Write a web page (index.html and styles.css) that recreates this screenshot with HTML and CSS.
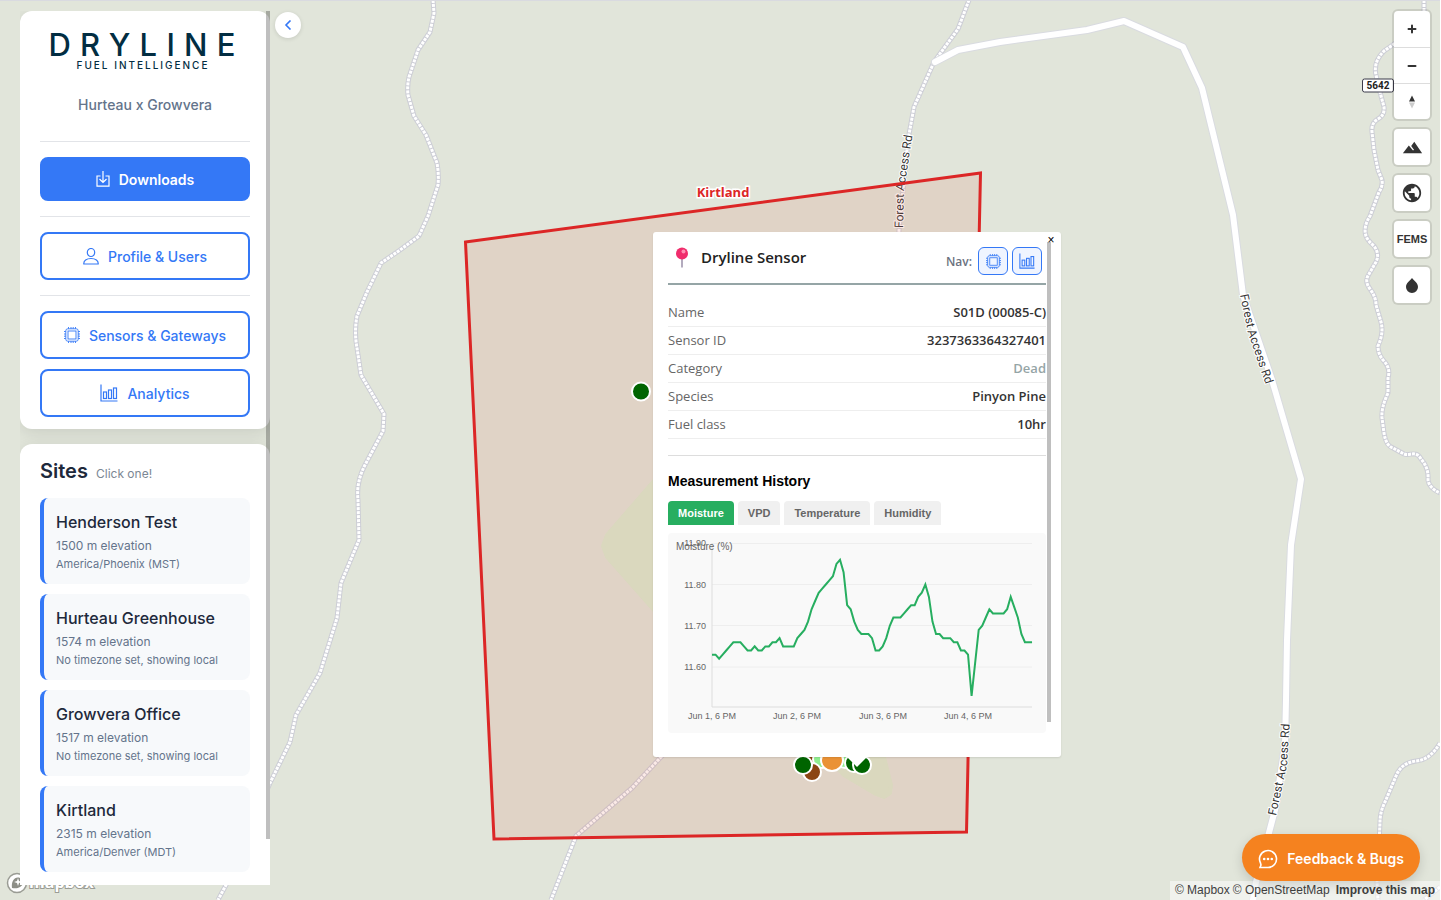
FILE: index.html
```html
<!DOCTYPE html>
<html lang="en">
  <head>
    <meta charset="utf-8" />
    <title>Dryline Fuel Intelligence</title>
    <link rel="stylesheet" href="styles.css">
  </head>
  <body>
    <!-- shared icons -->
    <svg class="sprite" aria-hidden="true">
      <symbol id="icon-chip" viewBox="0 0 16 16">
        <rect x="1.800" y="1.800" width="12.400" height="12.400" rx="2" />
        <rect x="4" y="4" width="8" height="8" />
        <path d="M4.500 0v1.800M7 0v1.800M9.200 0v1.800M11.500 0v1.800M4.500 14.200v1.800M7 14.200v1.800M9.200 14.200v1.800M11.500 14.200v1.800M0 4.500h1.800M0 7h1.800M0 9.200h1.800M0 11.500h1.800M14.200 4.500h1.800M14.200 7h1.800M14.200 9.200h1.800M14.200 11.500h1.800" />
      </symbol>
      <symbol id="icon-chart" viewBox="0 0 18 18">
        <path d="M1 .5V17h16.500" />
        <rect x="3.500" y="8" width="3" height="6.500" />
        <rect x="8.500" y="6" width="3" height="8.500" />
        <rect x="13.500" y="4" width="3" height="10.500" />
      </symbol>
    </svg>

    <div class="app">
      <svg class="map" viewBox="0 0 1440 900" preserveAspectRatio="xMidYMid slice">
        <defs>
          <path id="trail-west" d="M433 0L434 13L430 32L418 50L409 77Q407 86 408 95L414 116L426 135L437 163Q439 174 438 185L428 216L419 236L400 250L381 263L367 292L357 316Q354 332 357 348L361 375L384 414L383 431L365 465Q356 482 358 500L359 540L341 583L337 618L320 673L296 715L290 742L270 783L226 885L218 900" />
          <path id="trail-north" d="M969 0L958 29L934 62L914 107L908 140L899 230L895 300" />
          <path id="trail-south" d="M680 735L661 757L632 788L576 836L551 900" />
          <path id="trail-east" d="M1424 0L1424 14Q1415 32 1394 44L1384 51Q1373 62 1376 75L1380 92L1384 107Q1385 115 1378 119Q1371 123 1372 132L1374 150L1378 170L1382 180Q1383 186 1379 192L1370 216Q1363 227 1366 236Q1368 241 1374 246Q1380 254 1376 262L1369 274Q1364 281 1370 289Q1376 297 1376 305L1381 322Q1384 333 1378 346Q1378 354 1383 360Q1391 368 1388 378L1388 393Q1381 408 1382 418L1384 433Q1386 446 1393 448L1404 454C1410 456 1416 450 1421 459Q1429 468 1428 480Q1429 488 1440 493" />
          <path id="trail-southeast" d="M1440 743Q1430 760 1416 761Q1401 763 1396 776L1385 802Q1380 812 1380 822L1379 845L1377 882L1378 900M1440 887L1424 900" />
          <path id="road" d="M935 62L958 50L1000 42L1087 30L1124 21L1183 47L1202 88L1233 215L1243 295L1272 380L1301 479L1291 545L1287 640L1286 700L1285 745L1275 810L1256 882L1253 900" />
          <path id="label-north" d="M903 228L904 190L913 132" />
          <path id="label-east" d="M1240 295L1248 333L1267 388" />
          <path id="label-south" d="M1276 816L1287 765L1290 718" />
        </defs>

        <polygon class="meadow" points="700,428 607,535 603,546 607,557 700,662" />
        <polygon class="meadow" points="815,745 884,757 891,785 890,793 884,797 876,794 844,775" />

        <g class="trail-edge">
          <use href="#trail-west" /><use href="#trail-north" /><use href="#trail-south" /><use href="#trail-east" /><use href="#trail-southeast" />
        </g>
        <g class="trail">
          <use href="#trail-west" /><use href="#trail-north" /><use href="#trail-south" /><use href="#trail-east" /><use href="#trail-southeast" />
        </g>
        <use href="#road" class="road-edge" />
        <use href="#road" class="road" />

        <g class="road-name">
          <text><textPath href="#label-north">Forest Access Rd</textPath></text>
          <text><textPath href="#label-east">Forest Access Rd</textPath></text>
          <text><textPath href="#label-south">Forest Access Rd</textPath></text>
        </g>
        <rect class="shield" x="1362.500" y="79" width="31" height="13" rx="2" />
        <text class="shield-text" x="1378" y="89">5642</text>

        <polygon class="site-area" points="465.500,242 980.500,173 966.500,832 494,839" />
        <text class="site-name" x="723" y="197">Kirtland</text>

        <g class="sensors">
          <circle class="live" cx="641" cy="391.500" r="9" />
          <circle class="dead" cx="813" cy="757" r="9" />
          <circle class="herb" cx="822" cy="759" r="9" />
          <circle class="herb" cx="845" cy="759" r="9" />
          <circle class="dead" cx="812" cy="772" r="9" />
          <circle class="live" cx="803" cy="765" r="9" />
          <circle class="gateway" cx="832" cy="760" r="11" />
          <circle class="live" cx="854" cy="763" r="9" />
          <circle class="live" cx="862" cy="765" r="9" />
        </g>
      </svg>

      <svg class="mapbox-logo" width="92" height="26" viewBox="0 0 92 26" role="img" aria-label="Mapbox">
        <circle cx="12" cy="13" r="9.500" />
        <path d="M7 18C6 11 10 6 15 8C19 10 19 15 15 17C12 19 9 18 7 18Z" />
        <path class="spark" d="M13 8l1 3 3 1-3 1-1 3-1-3-3-1 3-1z" />
        <text x="24" y="18">mapbox</text>
      </svg>

      <aside class="sidebar">
        <section class="panel">
          <div class="logo">
            <div class="logo-name">DRYLINE</div>
            <div class="logo-tag">FUEL INTELLIGENCE</div>
          </div>
          <p class="org">Hurteau x Growvera</p>
          <hr>
          <button class="btn btn-solid">
            <svg width="14" height="16" viewBox="0 0 14 16"><path d="M4.500 5H1v10.200h12V5H9.500M7 0v11M3.500 8L7 11.500L10.500 8" /></svg>
            Downloads
          </button>
          <hr>
          <button class="btn">
            <svg width="16" height="17" viewBox="0 0 16 17"><ellipse cx="8" cy="4.500" rx="3.700" ry="4" /><path d="M.8 16C.5 12.500 3.500 10.500 8 10.500S15.500 12.500 15.200 16Z" /></svg>
            Profile &amp; Users
          </button>
          <hr>
          <button class="btn">
            <svg class="chip" width="16" height="16"><use href="#icon-chip" /></svg>
            Sensors &amp; Gateways
          </button>
          <button class="btn">
            <svg width="18" height="18"><use href="#icon-chart" /></svg>
            Analytics
          </button>
        </section>

        <section class="panel panel-sites">
          <h2>Sites <small>Click one!</small></h2>
          <button class="site">
            <span class="site-title">Henderson Test</span>
            <span class="site-elev">1500 m elevation</span>
            <span class="site-zone">America/Phoenix (MST)</span>
          </button>
          <button class="site">
            <span class="site-title">Hurteau Greenhouse</span>
            <span class="site-elev">1574 m elevation</span>
            <span class="site-zone">No timezone set, showing local</span>
          </button>
          <button class="site">
            <span class="site-title">Growvera Office</span>
            <span class="site-elev">1517 m elevation</span>
            <span class="site-zone">No timezone set, showing local</span>
          </button>
          <button class="site">
            <span class="site-title">Kirtland</span>
            <span class="site-elev">2315 m elevation</span>
            <span class="site-zone">America/Denver (MDT)</span>
          </button>
        </section>
        <div class="thumb"></div>
      </aside>

      <button class="collapse" aria-label="Collapse sidebar">
        <svg width="8" height="10" viewBox="0 0 8 10"><path d="M6.500 .5L2 5L6.500 9.500" /></svg>
      </button>

      <div class="popup">
        <button class="popup-close" aria-label="Close popup">×</button>
        <header class="popup-head">
          <svg class="pin" width="14" height="21" viewBox="0 0 14 21">
            <path d="M7 11v9.500" stroke="#9a8fa8" stroke-width="1.500" />
            <circle cx="7" cy="6.500" r="6" fill="#f02d6c" />
            <circle cx="8.500" cy="4.500" r="2" fill="#ff8fb2" />
          </svg>
          <h3>Dryline Sensor</h3>
          <span class="nav-label">Nav:</span>
          <button class="nav-btn" aria-label="Sensors"><svg class="chip" width="15" height="15"><use href="#icon-chip" /></svg></button>
          <button class="nav-btn" aria-label="Analytics"><svg width="16" height="16"><use href="#icon-chart" /></svg></button>
        </header>
        <dl class="info">
          <div><dt>Name</dt><dd>S01D (00085-C)</dd></div>
          <div><dt>Sensor ID</dt><dd>3237363364327401</dd></div>
          <div><dt>Category</dt><dd class="category">Dead</dd></div>
          <div><dt>Species</dt><dd>Pinyon Pine</dd></div>
          <div><dt>Fuel class</dt><dd>10hr</dd></div>
        </dl>
        <section class="history">
          <h4>Measurement History</h4>
          <div class="tabs">
            <button class="tab active">Moisture</button>
            <button class="tab">VPD</button>
            <button class="tab">Temperature</button>
            <button class="tab">Humidity</button>
          </div>
          <svg class="chart" viewBox="0 0 378 200">
            <path class="grid" d="M44 10.500H364M44 51.500H364M44 92.500H364M44 134H364" />
            <path class="axis" d="M44 10V174H364" />
            <g class="ylabels">
              <text x="38" y="13">11.90</text>
              <text x="38" y="55">11.80</text>
              <text x="38" y="96">11.70</text>
              <text x="38" y="137">11.60</text>
            </g>
            <text class="unit" x="8" y="17">Moisture (%)</text>
            <g class="xlabels">
              <text x="44" y="186">Jun 1, 6 PM</text>
              <text x="129" y="186">Jun 2, 6 PM</text>
              <text x="215" y="186">Jun 3, 6 PM</text>
              <text x="300" y="186">Jun 4, 6 PM</text>
            </g>
            <!-- x: hours, y: hundredths of a percent above 11 -->
            <polyline class="line" transform="translate(44 381.500) scale(3.556 -4.125)" points="0,63 1,63 2,62 3,63 4,64 5,65 6,66 7,66 8,66 9,65 10,64 11,64 12,65 13,64 14,64 15,65 16,65 17,66 18,66 19,67 20,65 21,65 22,65 23,65 24,67 25,68 26,69 27,71 28,74 29,76 30,78 31,79 32,80 33,81 34,82 35,85 36,86 37,83 38,75 39,74 40,71 41,69 42,68 43,68 44,68 45,67 46,64 47,64 48,65 49,67 50,70 51,72 52,72 53,72 54,73 55,74 56,75 57,75 58,77 59,78 60,80 61,77 62,71 63,68 64,68 65,67 66,67 67,67 68,66 69,66 70,64 71,64 72,63 73,53 74,61 75,69 76,70 77,72 78,74 79,73 80,73 81,73 82,73 83,74 84,77 85,74.500 86,72 87,68 88,66 89,66 90,66" />
          </svg>
        </section>
        <div class="thumb"></div>
      </div>

      <div class="controls">
        <div class="ctrl-group">
          <button aria-label="Zoom in"><svg width="10" height="10" viewBox="0 0 10 10"><path d="M5 1.500v7M1.500 5h7" stroke="#333" stroke-width="2" stroke-linecap="round" /></svg></button>
          <button aria-label="Zoom out"><svg width="10" height="10" viewBox="0 0 10 10"><path d="M1.500 5h7" stroke="#333" stroke-width="2" stroke-linecap="round" /></svg></button>
          <button aria-label="Reset north"><svg width="8" height="14" viewBox="0 0 8 14"><path d="M1 6.500L4 .5L7 6.500Z" fill="#333" /><path d="M1 7.500L4 13.500L7 7.500Z" fill="#ccc" /></svg></button>
        </div>
        <div class="ctrl-group">
          <button aria-label="Terrain"><svg width="21" height="21" viewBox="0 0 24 24"><path d="M14 5.500l-3.500 4.700 3.200 4.300-1.100.8L7.800 9.700 1 18.500h22z" fill="#333" /></svg></button>
        </div>
        <div class="ctrl-group">
          <button aria-label="Globe"><svg width="22" height="22" viewBox="0 0 24 24"><path fill="#333" d="M12 2C6.480 2 2 6.480 2 12s4.480 10 10 10 10-4.480 10-10S17.520 2 12 2zm-1 17.930c-3.950-.49-7-3.850-7-7.930 0-.62.08-1.210.21-1.790L9 15v1c0 1.100.9 2 2 2v1.930zm6.900-2.540c-.26-.81-1-1.390-1.900-1.390h-1v-3c0-.55-.45-1-1-1H8v-2h2c.55 0 1-.45 1-1V7h2c1.100 0 2-.9 2-2v-.41c2.930 1.190 5 4.060 5 7.410 0 2.080-.8 3.970-2.100 5.390z" /></svg></button>
        </div>
        <div class="ctrl-group">
          <button class="fems">FEMS</button>
        </div>
        <div class="ctrl-group">
          <button aria-label="Moisture layer"><svg width="12" height="15" viewBox="0 0 12 15"><path d="M6 0C8 2.500 12 5 12 9A6 6 0 0 1 0 9C0 5 4 2.500 6 0Z" fill="#333" /></svg></button>
        </div>
      </div>

      <button class="feedback">
        <svg width="20" height="20" viewBox="0 0 20 20"><path d="M2 18.500H10A8.500 8.500 0 1 0 2.500 14L3 16Z" /><circle cx="6.200" cy="10" r="1.300" /><circle cx="10" cy="10" r="1.300" /><circle cx="13.800" cy="10" r="1.300" /></svg>
        Feedback &amp; Bugs
      </button>

      <footer class="attribution">
        <a href="#">© Mapbox</a>
        <a href="#">© OpenStreetMap</a>
        <a href="#" class="improve">Improve this map</a>
      </footer>
    </div>
  </body>
</html>
```
FILE: styles.css
```css
*{
  box-sizing: border-box;
  margin: 0;
  padding: 0;
}
body{
  background: #fff;
  font-family: Inter, "Liberation Sans", sans-serif;
}
button{
  font-family: inherit;
  border: 0;
  background: none;
  cursor: pointer;
}
.sprite{
  position: absolute;
  width: 0;
  height: 0;
}
.app{
  position: relative;
  height: 100vh;
  margin-right: 1px;
  overflow: hidden;
  background: #e1e5da;
  border-top: 1px solid #d9dae0;
}

/* map */
.map{
  position: absolute;
  top: -1px;
  left: 0;
  width: 100%;
  height: 100vh;
  z-index: 0;
  clip-path: inset(1px 0 0 0);
}
.meadow{
  fill: #d9ebd0;
  stroke: #d9ebd0;
  stroke-width: 4;
  stroke-linejoin: round;
}
.trail-edge,.trail{
  fill: none;
  stroke-linejoin: round;
}
.trail-edge{
  stroke: #cdced6;
  stroke-width: 5;
}
.trail{
  stroke: #fff;
  stroke-width: 3;
  stroke-dasharray: 3 1;
}
.road-edge,.road{
  fill: none;
  stroke-linejoin: round;
  stroke-linecap: round;
}
.road-edge{
  stroke: #d9dbe0;
  stroke-width: 8;
}
.road{
  stroke: #fff;
  stroke-width: 6;
}
.road-name{
  font: 12px Roboto, sans-serif;
  fill: #333;
  stroke: #fff;
  stroke-width: 2;
  paint-order: stroke;
}
.shield{
  fill: #fff;
  stroke: #3b3b4a;
}
.shield-text{
  font: bold 10px Roboto, sans-serif;
  fill: #222;
  text-anchor: middle;
}
.site-area{
  fill: rgba(225, 92, 72, .13);
  stroke: #dc2626;
  stroke-width: 3;
}
.site-name{
  font: bold 13px "Open Sans", sans-serif;
  fill: #dc2626;
  stroke: #fff;
  stroke-width: 3;
  paint-order: stroke;
  text-anchor: middle;
}
.sensors{
  stroke: #fff;
  stroke-width: 2;
}
.live{
  fill: #006400;
}
.dead{
  fill: #8b4513;
}
.herb{
  fill: #90ee90;
}
.gateway{
  fill: #ea9236;
}
.mapbox-logo{
  position: absolute;
  left: 5px;
  bottom: 4px;
  fill: #fff;
}
.mapbox-logo circle{
  stroke: #9a9c94;
  stroke-width: 1.5;
}
.mapbox-logo path{
  fill: #8d8f87;
}
.mapbox-logo .spark{
  fill: #fff;
}
.mapbox-logo text{
  font: bold 16px "Open Sans", sans-serif;
  stroke: #9a9c94;
  stroke-width: 2;
  paint-order: stroke;
}

/* sidebar */
.sidebar{
  position: absolute;
  top: 10px;
  bottom: 15px;
  left: 20px;
  width: 250px;
  overflow: hidden;
}
.panel{
  display: flex;
  flex-direction: column;
  padding: 20px 20px 12px;
  background: #fff;
  border-radius: 12px;
  box-shadow: 0 4px 16px rgba(0, 0, 0, .1);
}
.logo{
  padding-right: 6px;
  color: #022d42;
  text-align: center;
  white-space: nowrap;
}
.logo-name{
  font-size: 31px;
  font-weight: 500;
  line-height: 28px;
  letter-spacing: .3em;
  margin-right: -.3em;
}
.logo-tag{
  font-size: 10px;
  font-weight: 500;
  line-height: 12px;
  letter-spacing: .2em;
  margin-right: -.2em;
}
.org{
  margin-top: 24px;
  color: #64748b;
  font-size: 14px;
  font-weight: 500;
  line-height: 20px;
  text-align: center;
}
.panel hr{
  border: 0;
  border-top: 1px solid #e2e4e8;
  margin: 15px 0;
}
.org + hr{
  margin-top: 26px;
}
.btn{
  display: flex;
  align-items: center;
  justify-content: center;
  gap: 9px;
  height: 48px;
  color: #3478f6;
  border: 2px solid #3478f6;
  border-radius: 8px;
  font-size: 14px;
  font-weight: 500;
}
.btn + .btn{
  margin-top: 10px;
}
.btn-solid{
  height: 44px;
  color: #fff;
  background: #3478f6;
  font-weight: 600;
}
.btn svg,.nav-btn svg,.collapse svg{
  fill: none;
  stroke: currentColor;
  stroke-width: 1.2;
}
.btn .chip,.nav-btn .chip{
  stroke-width: .9;
}
.panel-sites{
  gap: 10px;
  margin-top: 15px;
  padding: 14px 20px 30px;
}
.panel-sites h2{
  padding-bottom: 4px;
  color: #1e293b;
  font-size: 20px;
  font-weight: 600;
  line-height: 26px;
}
.panel-sites small{
  margin-left: 3px;
  color: #7b8794;
  font-size: 12px;
  font-weight: 400;
  line-height: 16px;
}
.site{
  display: flex;
  flex-direction: column;
  height: 86px;
  padding: 13px 12px;
  text-align: left;
  background: #f7f9fb;
  border-left: 4px solid #3478f6;
  border-radius: 8px;
}
.site-title{
  color: #1e293b;
  font-size: 16px;
  font-weight: 500;
  line-height: 22px;
  margin-bottom: 3px;
}
.site-elev{
  color: #64748b;
  font-size: 12px;
  line-height: 20px;
}
.site-zone{
  color: #64748b;
  font-size: 11px;
  line-height: 16px;
}
.thumb{
  position: absolute;
  top: 0;
  right: 0;
  bottom: 46px;
  width: 4px;
  background: rgba(0, 0, 0, .25);
}
.collapse{
  position: absolute;
  top: 11px;
  left: 275px;
  display: flex;
  align-items: center;
  justify-content: center;
  width: 26px;
  height: 26px;
  color: #3478f6;
  background: #fff;
  border-radius: 50%;
  box-shadow: 0 1px 4px rgba(0, 0, 0, .12);
}
.collapse svg{
  stroke-width: 1.6;
}

/* popup */
.popup{
  position: absolute;
  top: 231px;
  left: 653px;
  width: 408px;
  padding: 15px 15px 24px;
  background: #fff;
  border-radius: 3px;
  box-shadow: 0 1px 2px rgba(0, 0, 0, .1);
  font-family: "Open Sans", "Noto Sans", sans-serif;
}
.popup:after{
  content: "";
  position: absolute;
  top: 100%;
  left: 50%;
  margin-left: -10px;
  border: 10px solid transparent;
  border-top-color: #fff;
  border-bottom: 0;
}
.popup .thumb{
  top: 10px;
  right: 10px;
  bottom: 35px;
}
.popup-close{
  position: absolute;
  top: 0;
  right: 5px;
  width: 10px;
  font: 12px/16px "Liberation Sans", sans-serif;
}
.popup-head{
  display: flex;
  align-items: center;
  gap: 4px;
  padding: 0 4px 8px 7px;
  border-bottom: 2px solid #95a5a6;
}
.popup-head h3{
  flex: 1;
  margin-left: 8px;
  padding-bottom: 8px;
  color: #222;
  font-size: 15px;
  font-weight: 600;
  line-height: 20px;
}
.pin{
  margin-bottom: 7px;
}
.nav-label{
  color: #6b7280;
  font-size: 12px;
  font-weight: 600;
  margin-right: 2px;
}
.nav-btn{
  display: flex;
  align-items: center;
  justify-content: center;
  width: 30px;
  height: 28px;
  color: #3478f6;
  background: #eff4ff;
  border: 1px solid #3478f6;
  border-radius: 6px;
}
.info{
  margin-top: 14px;
  font-size: 13px;
}
.info div{
  display: flex;
  justify-content: space-between;
  height: 28px;
  line-height: 26px;
  border-bottom: 1px solid #eee;
}
.info dt{
  color: #666;
}
.info dd{
  color: #333;
  font-weight: 600;
}
.info .category{
  color: #95a5a6;
}
.history{
  margin-top: 16px;
  border-top: 1px solid #ddd;
  padding-top: 16px;
  font-family: "Liberation Sans", sans-serif;
}
.history h4{
  font-size: 14px;
  line-height: 18px;
}
.tabs{
  display: flex;
  gap: 4px;
  margin: 11px 0 8px;
}
.tab{
  height: 24px;
  padding: 0 10px;
  color: #666;
  background: #f0f0f0;
  border-radius: 4px 4px 0 0;
  font-size: 11px;
  font-weight: bold;
}
.tab.active{
  color: #fff;
  background: #27ae60;
}
.chart{
  display: block;
  width: 100%;
  background: #f9f9f9;
  border-radius: 4px;
  font-size: 9px;
  fill: #666;
}
.chart .grid{
  stroke: #eee;
}
.chart .axis{
  fill: none;
  stroke: #ddd;
}
.chart .line{
  fill: none;
  stroke: #27ae60;
  stroke-width: 2;
  vector-effect: non-scaling-stroke;
}
.chart .unit{
  font-size: 10px;
}
.ylabels{
  text-anchor: end;
}
.xlabels{
  text-anchor: middle;
}

/* right side */
.controls{
  position: absolute;
  top: 10px;
  right: 10px;
  display: flex;
  flex-direction: column;
  gap: 10px;
}
.ctrl-group{
  background: #fff;
  border-radius: 4px;
  box-shadow: 0 0 0 2px rgba(0, 0, 0, .1);
}
.ctrl-group button{
  display: flex;
  align-items: center;
  justify-content: center;
  width: 36px;
  height: 36px;
}
.ctrl-group button + button{
  border-top: 1px solid #ddd;
}
.ctrl-group .fems{
  color: #333;
  font: bold 11px "Liberation Sans", sans-serif;
}
.feedback{
  position: absolute;
  right: 20px;
  bottom: 19px;
  display: flex;
  align-items: center;
  gap: 9px;
  height: 47px;
  padding: 2px 16px 0;
  color: #fff;
  background: #f5821f;
  border-radius: 24px;
  box-shadow: 0 4px 12px rgba(0, 0, 0, .15);
  font-size: 14px;
  font-weight: 600;
  z-index: 1;
}
.feedback svg{
  fill: #fff;
}
.feedback path{
  fill: none;
  stroke: #fff;
  stroke-width: 1.6;
}
.attribution{
  position: absolute;
  right: 0;
  bottom: 0;
  display: flex;
  gap: 3px;
  padding: 0 5px;
  background: rgba(255, 255, 255, .5);
  font: 12px/19px "Liberation Sans", sans-serif;
}
.attribution a{
  color: #404040;
  text-decoration: none;
}
.attribution .improve{
  margin-left: 3px;
  font-weight: bold;
}
```
